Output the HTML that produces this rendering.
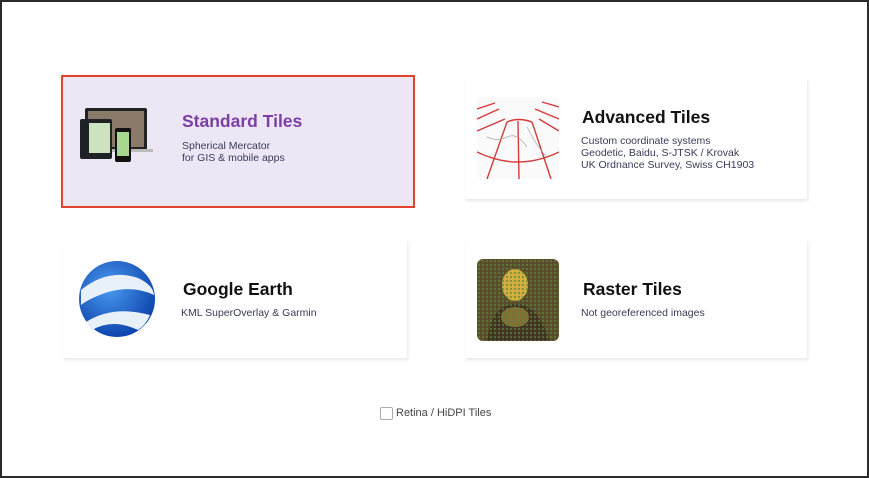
<!DOCTYPE html>
<html><head><meta charset="utf-8"><style>
html,body{margin:0;padding:0}
body{width:869px;height:478px;position:relative;background:#fff;overflow:hidden;font-family:"Liberation Sans",sans-serif}
.frame{position:absolute;left:0;top:0;width:865px;height:474px;border:2px solid #2b2b2b}
.card{position:absolute;background:#fff;box-shadow:1px 2px 3px rgba(0,0,0,0.10)}
.t{position:absolute;font-family:"Liberation Sans",sans-serif;font-size:17.5px;font-weight:bold;color:#111}
.d{position:absolute;font-size:10.5px;line-height:12px;color:#3a3a5a}
</style></head><body>
<div class="frame"></div>

<div class="card" style="left:61px;top:75px;width:350px;height:129px;background:#ede6f5;border:2px solid #e0442c;box-shadow:none"></div>
<svg style="position:absolute;left:80px;top:105px" width="80" height="62">
<rect x="5" y="3" width="62" height="42" rx="2" fill="#222"/>
<rect x="8" y="6" width="56" height="36" fill="#8a7a6a"/>
<rect x="1" y="44" width="72" height="3" fill="#bbb"/>
<rect x="0" y="14" width="32" height="40" rx="2" fill="#1e2226"/>
<rect x="9" y="18" width="21" height="30" fill="#cde3c0"/>
<rect x="35" y="23" width="16" height="34" rx="2" fill="#111"/>
<rect x="37" y="27" width="12" height="24" fill="#a8d890"/>
</svg>
<div class="t" style="left:182px;top:111px;color:#7b3fa6">Standard Tiles</div>
<div class="d" style="left:182px;top:140px">Spherical Mercator<br>for GIS &amp; mobile apps</div>

<div class="card" style="left:465px;top:78px;width:342px;height:121px"></div>
<svg style="position:absolute;left:477px;top:97px" width="82" height="82">
<rect width="82" height="82" rx="6" fill="#fafafa"/>
<g stroke="#d53a3a" stroke-width="1.4" fill="none">
<path d="M0 12 L18 6 M0 22 L22 12 M0 34 L28 22 M10 82 L30 25 M42 82 L41 24 M74 82 L55 25 M82 34 L62 22 M82 22 L58 12 M82 10 L65 5"/>
<path d="M0 55 Q41 75 82 55 M30 25 Q41 20 55 25"/>
</g>
<path d="M10 40 q10 5 20 0 t20 10 M50 30 q10 20 20 30" stroke="#aaa" stroke-width="0.7" fill="none"/>
</svg>
<div class="t" style="left:582px;top:107px">Advanced Tiles</div>
<div class="d" style="left:581px;top:135px">Custom coordinate systems<br>Geodetic, Baidu, S-JTSK / Krovak<br>UK Ordnance Survey, Swiss CH1903</div>

<div class="card" style="left:63px;top:240px;width:344px;height:118px"></div>
<svg style="position:absolute;left:78px;top:260px" width="80" height="80">
<defs><radialGradient id="g" cx="0.4" cy="0.35" r="0.7"><stop offset="0" stop-color="#4a9af0"/><stop offset="1" stop-color="#0a3fa8"/></radialGradient></defs>
<circle cx="39" cy="39" r="38" fill="url(#g)"/>
<path d="M3 30 Q30 8 60 18 Q75 25 76 35 Q55 25 30 32 Q12 38 3 45Z" fill="#e8f0fa"/>
<path d="M8 62 Q35 45 72 55 Q68 65 60 70 Q35 58 14 70Z" fill="#e8f0fa"/>
</svg>
<div class="t" style="left:183px;top:279px">Google Earth</div>
<div class="d" style="left:181px;top:307px">KML SuperOverlay &amp; Garmin</div>

<div class="card" style="left:465px;top:240px;width:342px;height:118px"></div>
<svg style="position:absolute;left:477px;top:259px" width="82" height="82">
<defs><pattern id="p" width="4" height="4" patternUnits="userSpaceOnUse"><circle cx="2" cy="2" r="1.2" fill="#5a8a3a" opacity="0.7"/></pattern></defs>
<rect width="82" height="82" rx="6" fill="#5a4a2a"/>
<ellipse cx="38" cy="26" rx="13" ry="16" fill="#d8b040"/>
<ellipse cx="38" cy="58" rx="14" ry="10" fill="#e0c050"/>
<path d="M10 82 Q15 45 38 45 Q62 45 72 82Z" fill="#2a1a1a" opacity="0.5"/>
<rect width="82" height="82" rx="6" fill="url(#p)"/>
</svg>
<div class="t" style="left:583px;top:279px">Raster Tiles</div>
<div class="d" style="left:581px;top:307px">Not georeferenced images</div>

<div style="position:absolute;left:380px;top:407px;width:11px;height:11px;border:1px solid #aaa;border-radius:2px;background:#fff"></div>
<div class="d" style="left:396px;top:407px;font-size:11px;color:#444">Retina / HiDPI Tiles</div>
</body></html>
